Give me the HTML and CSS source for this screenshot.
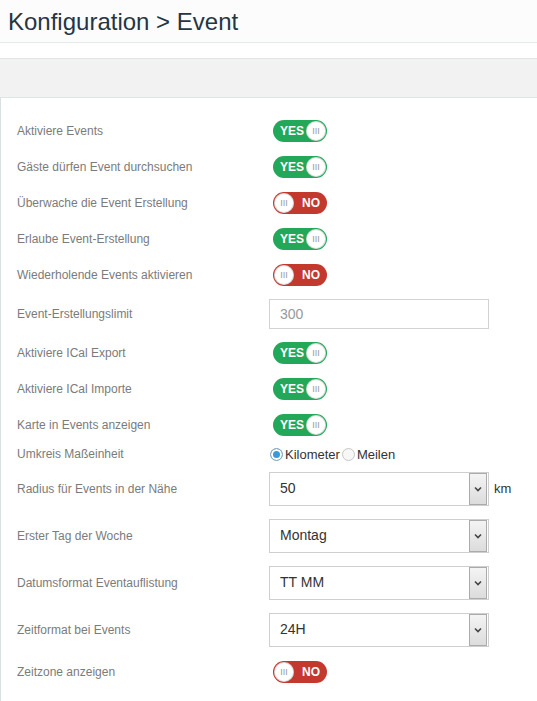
FILE: index.html
```html
<!DOCTYPE html>
<html lang="de">
<head>
  <meta charset="UTF-8">
  <title>Konfiguration &gt; Event</title>
  <link rel="stylesheet" href="styles.css">
</head>
<body>
  <div class="page-header">
    <h1>Konfiguration &gt; Event</h1>
  </div>

  <div class="toolbar"></div>

  <div class="config-form">
    <div class="row">
      <label>Aktiviere Events</label>
      <div class="switch on"><span class="txt">YES</span><span class="knob">III</span></div>
    </div>
    <div class="row">
      <label>Gäste dürfen Event durchsuchen</label>
      <div class="switch on"><span class="txt">YES</span><span class="knob">III</span></div>
    </div>
    <div class="row">
      <label>Überwache die Event Erstellung</label>
      <div class="switch off"><span class="knob">III</span><span class="txt">NO</span></div>
    </div>
    <div class="row">
      <label>Erlaube Event-Erstellung</label>
      <div class="switch on"><span class="txt">YES</span><span class="knob">III</span></div>
    </div>
    <div class="row">
      <label>Wiederholende Events aktivieren</label>
      <div class="switch off"><span class="knob">III</span><span class="txt">NO</span></div>
    </div>
    <div class="row row-input">
      <label>Event-Erstellungslimit</label>
      <input class="text-input" type="text" value="300">
    </div>
    <div class="row">
      <label>Aktiviere ICal Export</label>
      <div class="switch on"><span class="txt">YES</span><span class="knob">III</span></div>
    </div>
    <div class="row">
      <label>Aktiviere ICal Importe</label>
      <div class="switch on"><span class="txt">YES</span><span class="knob">III</span></div>
    </div>
    <div class="row">
      <label>Karte in Events anzeigen</label>
      <div class="switch on"><span class="txt">YES</span><span class="knob">III</span></div>
    </div>
    <div class="row row-radio">
      <label>Umkreis Maßeinheit</label>
      <div class="radios">
        <span class="radio checked"></span><span class="radio-label">Kilometer</span>
        <span class="radio"></span><span class="radio-label">Meilen</span>
      </div>
    </div>
    <div class="row row-select">
      <label>Radius für Events in der Nähe</label>
      <div class="select"><span class="value">50</span><span class="arrow"><svg width="8" height="6" viewBox="0 0 8 6"><path d="M1 1.5 L4 4.5 L7 1.5" fill="none" stroke="#444" stroke-width="1.6"/></svg></span></div>
      <span class="unit">km</span>
    </div>
    <div class="row row-select">
      <label>Erster Tag der Woche</label>
      <div class="select"><span class="value">Montag</span><span class="arrow"><svg width="8" height="6" viewBox="0 0 8 6"><path d="M1 1.5 L4 4.5 L7 1.5" fill="none" stroke="#444" stroke-width="1.6"/></svg></span></div>
    </div>
    <div class="row row-select">
      <label>Datumsformat Eventauflistung</label>
      <div class="select"><span class="value">TT MM</span><span class="arrow"><svg width="8" height="6" viewBox="0 0 8 6"><path d="M1 1.5 L4 4.5 L7 1.5" fill="none" stroke="#444" stroke-width="1.6"/></svg></span></div>
    </div>
    <div class="row row-select">
      <label>Zeitformat bei Events</label>
      <div class="select"><span class="value">24H</span><span class="arrow"><svg width="8" height="6" viewBox="0 0 8 6"><path d="M1 1.5 L4 4.5 L7 1.5" fill="none" stroke="#444" stroke-width="1.6"/></svg></span></div>
    </div>
    <div class="row row-last">
      <label>Zeitzone anzeigen</label>
      <div class="switch off"><span class="knob">III</span><span class="txt">NO</span></div>
    </div>
  </div>
</body>
</html>
```

FILE: styles.css
```css
body {
  margin: 0;
  background: #fff;
  font-family: 'Liberation Sans', Arial, sans-serif;
  color: #333;
}
.page-header {
  height: 43px;
  border-bottom: 1px solid #e6eaea;
  background: #fcfcfc;
  padding-left: 8px;
  box-sizing: border-box;
}
.page-header h1 {
  margin: 0;
  font-weight: normal;
  font-size: 24px;
  line-height: 44px;
  color: #253545;
}
.toolbar {
  margin-top: 15px;
  height: 38px;
  background: #f2f2f2;
  border-top: 1px solid #dde5e5;
  border-bottom: 1px solid #dde5e5;
}
.config-form {
  border-left: 1px solid #d8e0e2;
  padding: 15px 0 12px 16px;
}
.row {
  display: flex;
  align-items: center;
  height: 36px;
}
.row label {
  width: 252px;
  flex-shrink: 0;
  font-size: 12px;
  color: #7b7b7b;
}
.row-input {
  height: 42px;
}
.row-radio {
  height: 22px;
}
.row-select {
  height: 47px;
}
.row-last {
  height: 34px;
  margin-top: 2px;
}

.switch {
  display: flex;
  align-items: center;
  width: 54px;
  height: 22px;
  border-radius: 11px;
  margin-left: 4px;
  box-sizing: border-box;
  color: #fff;
  font-weight: bold;
  font-size: 12px;
}
.switch.on {
  background: #23a85a;
  padding: 0 1px 0 7px;
  justify-content: space-between;
}
.switch.off {
  background: #c4392e;
  padding: 0 7px 0 1px;
  justify-content: space-between;
}
.switch .knob {
  width: 20px;
  height: 20px;
  border-radius: 50%;
  background: #fff;
  box-shadow: inset 0 0 0 1px rgba(0,0,0,0.15);
  color: #9a9a9a;
  font-size: 9px;
  font-weight: normal;
  line-height: 20px;
  text-align: center;
  letter-spacing: 0;
}

.text-input {
  width: 220px;
  height: 30px;
  box-sizing: border-box;
  border: 1px solid #d2d2d2;
  padding: 0 10px;
  font-family: 'Liberation Sans', Arial, sans-serif;
  font-size: 14px;
  color: #999;
  outline: none;
}

.radios {
  display: flex;
  align-items: center;
  margin-left: 1px;
  font-size: 13px;
  color: #333;
}
.radio {
  width: 13px;
  height: 13px;
  border-radius: 50%;
  border: 1px solid #c6c6c6;
  background: #f7f7f7;
  box-sizing: border-box;
  margin-right: 2px;
}
.radio.checked {
  background: #3a9ad9;
  box-shadow: inset 0 0 0 2px #fff;
  border-color: #8ab;
}
.radio-label {
  margin-right: 2px;
}

.select {
  display: flex;
  width: 220px;
  height: 34px;
  box-sizing: border-box;
  border: 1px solid #cfcfcf;
  background: #fff;
}
.select .value {
  flex: 1;
  padding-left: 10px;
  font-size: 14px;
  line-height: 30px;
  color: #333;
}
.select .arrow {
  width: 16px;
  margin: 0 1px 0 0;
  border: 1px solid #ababab;
  background: linear-gradient(to bottom, #f4f4f4, #dcdcdc);
  display: flex;
  align-items: center;
  justify-content: center;
}
.unit {
  margin-left: 5px;
  font-size: 13px;
  color: #333;
}
```
